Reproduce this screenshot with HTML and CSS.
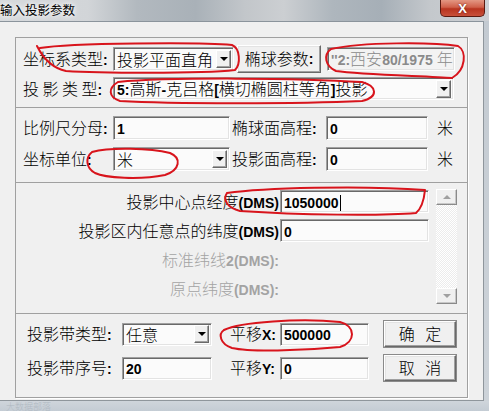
FILE: index.html
```html
<!DOCTYPE html>
<html lang="zh-CN">
<head>
<meta charset="utf-8">
<title>输入投影参数</title>
<link rel="stylesheet" href="styles.css">
</head>
<body>
<div class="win">
  <div class="titlebar">
    <span class="title">输入投影参数</span>
    <div class="close"><span>X</span></div>
  </div>
  <div class="mid">
    <div class="client">
      <div class="group">
        <div class="sec sec1">
          <div class="row r1">
            <span class="lbl w90">坐标系类型<b class="n">:</b></span>
            <div class="combo c1"><span class="val">投影平面直角</span><span class="ddb"><i class="tri"></i></span></div>
            <div class="btn b-ell">椭球参数<b class="n">:</b></div>
            <div class="field ro f-ell"><span class="val grey"><b class="n">''2:</b>西安<b class="n">80/1975 </b>年</span></div>
          </div>
          <div class="row r2">
            <span class="lbl w90">投 影 类 型<b class="n">:</b></span>
            <div class="combo c2"><span class="val"><b class="n">5:</b>高斯<b class="n">-</b>克吕格<b class="n">[</b>横切椭圆柱等角<b class="n">]</b>投影</span><span class="ddb"><i class="tri"></i></span></div>
          </div>
        </div>
        <div class="sec sec2">
          <div class="row r3">
            <span class="lbl w90">比例尺分母<b class="n">:</b></span>
            <div class="field f-a"><span class="val"><b class="n">1</b></span></div>
            <span class="lbl w94 ml2">椭球面高程<b class="n">:</b></span>
            <div class="field f-b"><span class="val"><b class="n">0</b></span></div>
            <span class="unit">米</span>
          </div>
          <div class="row r4">
            <span class="lbl w90">坐标单位<b class="n">:</b></span>
            <div class="combo f-a"><span class="val">米</span><span class="ddb"><i class="tri"></i></span></div>
            <span class="lbl w94 ml2">投影面高程<b class="n">:</b></span>
            <div class="field f-b"><span class="val"><b class="n">0</b></span></div>
            <span class="unit">米</span>
          </div>
        </div>
        <div class="sec sec3">
          <div class="plist">
            <div class="prow">
              <span class="plbl">投影中心点经度<b class="n">(DMS)</b></span>
              <div class="field f-p"><span class="val"><b class="n">1050000</b><i class="caret"></i></span></div>
            </div>
            <div class="prow">
              <span class="plbl">投影区内任意点的纬度<b class="n">(DMS)</b></span>
              <div class="field f-p"><span class="val"><b class="n">0</b></span></div>
            </div>
            <div class="prow">
              <span class="plbl dis">标准纬线<b class="n">2(DMS):</b></span>
            </div>
            <div class="prow">
              <span class="plbl dis">原点纬度<b class="n">(DMS):</b></span>
            </div>
          </div>
          <div class="sb">
            <div class="sbb"><i class="tri-up"></i></div>
            <div class="track"></div>
            <div class="sbb"><i class="tri-dn"></i></div>
          </div>
        </div>
        <div class="sec sec4">
          <div class="row r9">
            <span class="lbl w95">投影带类型<b class="n">:</b></span>
            <div class="combo f-z"><span class="val">任意</span><span class="ddb"><i class="tri"></i></span></div>
            <span class="lbl w50 ml18">平移<b class="n">X:</b></span>
            <div class="field f-x"><span class="val"><b class="n">500000</b></span></div>
            <div class="btn b-ok"><span class="bt">确 定</span></div>
          </div>
          <div class="row r10">
            <span class="lbl w95">投影带序号<b class="n">:</b></span>
            <div class="field f-z"><span class="val"><b class="n">20</b></span></div>
            <span class="lbl w50 ml18">平移<b class="n">Y:</b></span>
            <div class="field f-x"><span class="val"><b class="n">0</b></span></div>
            <div class="btn b-ok"><span class="bt">取 消</span></div>
          </div>
        </div>
      </div>
    </div>
    <div class="frame-r"></div>
  </div>
  <div class="frame-b"><span class="wm">大数据部落</span></div>
</div>
<svg class="marks" width="489" height="411" viewBox="0 0 489 411" xmlns="http://www.w3.org/2000/svg">
  <g fill="none" stroke="#d8141c" stroke-width="2" stroke-linecap="round" stroke-linejoin="round">
    <path d="M40,48 C70,43 200,42 232,45 C240,48 241,64 235,70 C200,74 95,73 66,71 C52,68 43,58 37,46"/>
    <path d="M331,49 C362,42 432,42 458,46 C467,51 466,70 452,78 C430,76 362,75 336,71 C325,66 323,55 331,49"/>
    <path d="M118,82 C170,77 300,78 362,82 C377,86 379,97 362,101 C300,104 170,104 120,101 C108,97 108,88 118,82"/>
    <path d="M92,152 C110,147 150,148 170,153 C182,158 180,170 165,175 C140,180 105,178 95,173 C86,168 85,158 92,152"/>
    <path d="M227,193 C262,188 360,185 425,190 C424,200 422,208 416,213 C380,216 300,215 240,211 C228,208 222,200 227,193"/>
    <path d="M224,330 C240,322 300,318 340,322 C356,326 356,342 340,347 C300,351 250,352 232,348 C220,344 218,334 224,330"/>
  </g>
</svg>
</body>
</html>
```

FILE: styles.css
```css
* { box-sizing: border-box; }
html, body { margin: 0; padding: 0; }
body {
  width: 489px;
  height: 411px;
  overflow: hidden;
  position: relative;
  background: #c9d0d7;
  font-family: "Noto Sans CJK SC", "Liberation Sans", sans-serif;
  font-size: 16px;
  font-weight: 300;
  line-height: 1.2;
  color: #000;
}
.win { width: 489px; height: 411px; display: flex; flex-direction: column; }

/* title bar */
.titlebar {
  height: 21px;
  flex: none;
  display: flex;
  justify-content: space-between;
  align-items: flex-start;
  background: linear-gradient(90deg, #d6d9dc 0%, #d2d5d8 18%, #b2b9bf 28%, #a9b1b8 40%, #c2c6ca 50%, #cccfd2 58%, #aeb6bd 68%, #a6afb7 78%, #c4c8cc 88%, #cdd0d4 100%);
}
.title {
  margin-top: 2px;
  margin-left: 0;
  font-size: 12.5px;
  font-weight: 400;
  color: #000;
  text-shadow: 0 0 4px #fff, 0 0 7px #fff;
}
.close {
  width: 45px;
  height: 17px;
  margin-right: 4px;
  border: 1px solid #5b1a10;
  border-top: none;
  border-radius: 0 0 5px 5px;
  background: linear-gradient(#e39783 0%, #d0604a 45%, #b8341f 55%, #c8503a 100%);
  display: flex;
  justify-content: center;
  align-items: center;
}
.close span {
  font-family: "Liberation Sans", sans-serif;
  font-weight: bold;
  font-size: 13px;
  line-height: 1;
  color: #fff;
  text-shadow: 0 0 2px #5b1a10;
}

/* window body */
.mid { height: 380px; display: flex; flex: none; }
.client {
  width: 484px;
  height: 380px;
  background: #f0f0f0;
  border-top: 1px solid #8b949c;
  border-right: 1px solid #8f969c;
  border-bottom: 1px solid #8f969c;
  padding: 15px 0 0 15px;
}
.frame-r { flex: 1; background: linear-gradient(#c3cad1, #cdd3d9); }
.frame-b {
  flex: 1;
  background: linear-gradient(#cfd5db, #c4ccd4);
  padding-left: 6px;
  display: flex;
  align-items: center;
}
.wm { font-size: 9px; line-height: 1; color: #b0b9c2; }

/* group */
.group {
  width: 453px;
  height: 361px;
  border: 1px solid #a0a0a0;
  box-shadow: 1px 1px 0 #ffffff;
  display: flex;
  flex-direction: column;
}
.sec { border-bottom: 1px solid #a0a0a0; flex: none; }
.sec1 { height: 70px; padding: 7px 0 0 7px; }
.sec2 { height: 75px; padding: 8px 0 0 7px; }
.sec3 { height: 131px; padding: 6px 0 0 0; display: flex; }
.sec4 { flex: 1; border-bottom: none; padding: 7px 0 0 11px; }

.row { display: flex; align-items: center; }
.r1 { height: 28px; }
.r2 { height: 23px; margin-top: 4px; }
.r3 { height: 24px; }
.r4 { height: 24px; margin-top: 7px; }
.r9 { height: 26px; }
.r10 { height: 26px; margin-top: 8px; }

.lbl { white-space: pre; flex: none; }
.w90 { width: 90px; }
.w94 { width: 94px; }
.w95 { width: 95px; }
.w50 { width: 50px; }
.ml2 { margin-left: 2px; }
.ml18 { margin-left: 18px; }
.unit { margin-left: 9px; }

.n {
  font-family: "Liberation Sans", sans-serif;
  font-weight: bold;
  font-size: 14px;
}

/* controls */
.field, .combo {
  height: 24px;
  flex: none;
  background: #fbfbfb;
  border: 1px solid;
  border-color: #a0a0a0 #ffffff #ffffff #a0a0a0;
  box-shadow: inset 1px 1px 0 #696969, inset -1px -1px 0 #e3e3e3;
  display: flex;
  align-items: center;
  overflow: hidden;
}
.field.ro { background: #f3f3f3; }
.val { padding-left: 3px; white-space: pre; flex: 1; min-width: 0; line-height: 20px; }
.grey { color: #8a8a8a; }
.ddb {
  width: 15px;
  height: 18px;
  margin-right: 2px;
  flex: none;
  background: #f0f0f0;
  border: 1px solid;
  border-color: #ffffff #696969 #696969 #ffffff;
  box-shadow: inset -1px -1px 0 #a0a0a0;
  display: flex;
  justify-content: center;
  align-items: center;
}
.tri {
  width: 0;
  height: 0;
  border-left: 4px solid transparent;
  border-right: 4px solid transparent;
  border-top: 4px solid #000;
}
.caret {
  display: inline-block;
  width: 1px;
  height: 16px;
  background: #000;
  vertical-align: -3px;
  margin-left: 1px;
}

.c1 { width: 121px; }
.c2 { width: 341px; height: 23px; }
.f-ell { width: 128px; margin-left: 6px; height: 24px; }
.f-a { width: 117px; }
.f-b { width: 102px; }
.f-p { width: 149px; height: 23px; }
.f-z { width: 90px; height: 23px; }
.f-x { width: 89px; height: 23px; }

.btn {
  flex: none;
  background: #f0f0f0;
  border: 1px solid;
  border-color: #ffffff #696969 #696969 #ffffff;
  box-shadow: inset -1px -1px 0 #a0a0a0, inset 1px 1px 0 #e3e3e3;
  display: flex;
  justify-content: center;
  align-items: center;
  white-space: pre;
}
.b-ell { width: 84px; height: 28px; margin-left: 3px; }
.b-ok {
  width: 72px;
  height: 26px;
  margin-left: 15px;
  outline: 1px solid #8a8a8a;
}
.bt { word-spacing: 7px; }

/* scroll list */
.plist { width: 413px; display: flex; flex-direction: column; gap: 6px; padding-top: 1px; }
.prow { height: 23px; display: flex; align-items: center; }
.plbl { width: 264px; text-align: right; padding-right: 1px; white-space: pre; flex: none; }
.dis { color: #a3a3a3; }
.sb {
  width: 21px;
  height: 115px;
  margin-left: 7px;
  display: flex;
  flex-direction: column;
}
.sbb {
  height: 16px;
  flex: none;
  background: #f0f0f0;
  border: 1px solid;
  border-color: #ffffff #8a8a8a #8a8a8a #ffffff;
  box-shadow: inset -1px -1px 0 #c8c8c8;
  display: flex;
  justify-content: center;
  align-items: center;
}
.track {
  flex: 1;
  background-color: #f7f7f7;
  background-image: repeating-conic-gradient(#ffffff 0 25%, #ececec 0 50%);
  background-size: 2px 2px;
}
.tri-up, .tri-dn {
  width: 0;
  height: 0;
  border-left: 4px solid transparent;
  border-right: 4px solid transparent;
}
.tri-up { border-bottom: 4px solid #a0a0a0; }
.tri-dn { border-top: 4px solid #a0a0a0; }

.marks { position: absolute; left: 0; top: 0; pointer-events: none; }
```
